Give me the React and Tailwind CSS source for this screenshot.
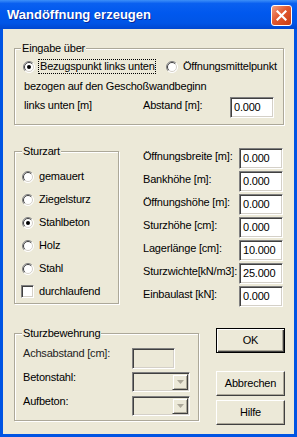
import React from 'react';

const sunken =
  'border border-t-[#808080] border-l-[#808080] border-r-white border-b-white shadow-[inset_1px_1px_0_#404040,inset_-1px_-1px_0_#D4D0C8]';
const group =
  'border border-[#ACA899] shadow-[inset_1px_1px_0_#fff,1px_1px_0_#fff] p-0 m-0';

const Radio = ({ checked }) => (
  <svg width="12" height="12" viewBox="0 0 12 12" className="shrink-0">
    <circle cx="6" cy="6" r="5.5" fill="#fff" />
    <path d="M2.1 9.9A5.5 5.5 0 0 1 9.9 2.1" fill="none" stroke="#808080" />
    <path d="M9.9 2.1A5.5 5.5 0 0 1 2.1 9.9" fill="none" stroke="#fff" />
    <path d="M2.8 9.2A4.5 4.5 0 0 1 9.2 2.8" fill="none" stroke="#404040" />
    <path d="M9.2 2.8A4.5 4.5 0 0 1 2.8 9.2" fill="none" stroke="#D4D0C8" />
    {checked && <circle cx="6" cy="6" r="2" fill="#000" />}
  </svg>
);

const TextBox = ({ value, className = '' }) => (
  <div className={`h-[21px] shrink-0 pl-[3px] leading-[19px] ${sunken} ${className}`}>{value}</div>
);

const Combo = () => (
  <div className={`w-[58px] h-[20px] flex justify-end p-[1px] bg-[#ECE9D8] ${sunken}`}>
    <div className="w-[16px] h-full flex items-center justify-center bg-[#ECE9D8] border border-t-[#ECE9D8] border-l-[#ECE9D8] border-r-[#404040] border-b-[#404040] shadow-[inset_1px_1px_0_#fff,inset_-1px_-1px_0_#ACA899]">
      <svg width="7" height="4" viewBox="0 0 7 4">
        <path d="M0 0h7L3.5 4z" fill="#ACA899" />
      </svg>
    </div>
  </div>
);

const Button = ({ label, isDefault, className = '' }) => (
  <div
    className={`w-[69px] h-[25px] flex items-center justify-center ${
      isDefault
        ? 'border border-black shadow-[inset_1px_1px_0_#fff,inset_-1px_-1px_0_#404040,inset_-2px_-2px_0_#ACA899]'
        : 'border border-t-white border-l-white border-r-[#404040] border-b-[#404040] shadow-[inset_-1px_-1px_0_#ACA899]'
    } ${className}`}
  >
    {label}
  </div>
);

const fields = [
  ['Öffnungsbreite [m]:', '0.000'],
  ['Bankhöhe [m]:', '0.000'],
  ['Öffnungshöhe [m]:', '0.000'],
  ['Sturzhöhe [cm]:', '0.000'],
  ['Lagerlänge [cm]:', '10.000'],
  ['Sturzwichte[kN/m3]:', '25.000'],
  ['Einbaulast [kN]:', '0.000'],
];

const sturzarten = [
  ['gemauert', false],
  ['Ziegelsturz', false],
  ['Stahlbeton', true],
  ['Holz', false],
  ['Stahl', false],
];

export default function App() {
  return (
    <div className="w-[297px] h-[437px] flex flex-col bg-[#0054E3] font-['Liberation_Sans',Arial,sans-serif] text-[11px] leading-[13px] tracking-[-0.2px] text-black">
      {/* title bar */}
      <div className="h-[29px] shrink-0 flex items-start pl-[7px] pr-[5px] bg-[linear-gradient(180deg,#3d8ff8_0%,#0a60f0_12%,#0058ee_45%,#0055e6_80%,#0047d0_100%)]">
        <span className="flex-1 mt-[7px] text-[13px] leading-[15px] font-bold tracking-normal text-white [text-shadow:1px_1px_0_#0b2a99]">
          Wandöffnung erzeugen
        </span>
        <div className="mt-[5px] w-[21px] h-[21px] flex items-center justify-center rounded-[3px] border border-white bg-[linear-gradient(135deg,#f2a184_0%,#e2592f_45%,#c83c12_100%)]">
          <svg width="11" height="11" viewBox="0 0 11 11">
            <path d="M1.5 1.5l8 8M9.5 1.5l-8 8" stroke="#fff" strokeWidth="2.2" strokeLinecap="square" />
          </svg>
        </div>
      </div>

      {/* body */}
      <div className="flex-1 mx-[3px] mb-[3px] flex flex-col pl-[11px] bg-[#ECE9D8]">
        {/* Eingabe über */}
        <fieldset className={`mt-[13px] w-[270px] h-[83px] ${group}`}>
          <legend className="ml-[6px] px-[1px] bg-[#ECE9D8]">Eingabe über</legend>
          <div className="mt-[4px] h-[15px] flex items-center pl-[8px]">
            <Radio checked />
            <span className="ml-[3px] w-[118px] h-[15px] pl-[1px] overflow-hidden whitespace-nowrap border border-dotted border-black leading-[13px]">
              Bezugspunkt links unten
            </span>
            <span className="ml-[10px]">
              <Radio />
            </span>
            <span className="ml-[5px] whitespace-nowrap">Öffnungsmittelpunkt</span>
          </div>
          <div className="mt-[6px] pl-[9px]">bezogen auf den Geschoßwandbeginn</div>
          <div className="mt-[4px] flex items-start pl-[9px]">
            <span className="w-[119px] pt-[2px]">links unten [m]</span>
            <span className="w-[87px] pt-[2px]">Abstand [m]:</span>
            <TextBox value="0.000" className="w-[44px] bg-white" />
          </div>
        </fieldset>

        {/* Sturzart + Werte */}
        <div className="mt-[20px] h-[159px] flex items-start">
          <fieldset className={`w-[105px] h-[159px] ${group}`}>
            <legend className="ml-[7px] px-[1px] bg-[#ECE9D8]">Sturzart</legend>
            <div className="mt-[7px] pl-[7px] flex flex-col">
              {sturzarten.map(([label, checked]) => (
                <div key={label} className="h-[23px] flex items-center gap-[5px]">
                  <Radio checked={checked} />
                  <span>{label}</span>
                </div>
              ))}
              <div className="h-[23px] flex items-center gap-[5px]">
                <span className={`w-[13px] h-[13px] -ml-[1px] bg-white ${sunken}`} />
                <span>durchlaufend</span>
              </div>
            </div>
          </fieldset>

          <div className="ml-[24px] mt-[3px] flex flex-col">
            {fields.map(([label, value]) => (
              <div key={label} className="h-[23px] flex items-start">
                <span className="w-[96px] pt-[2px] whitespace-nowrap">{label}</span>
                <TextBox value={value} className="w-[44px] bg-white" />
              </div>
            ))}
          </div>
        </div>

        {/* Sturzbewehrung + Buttons */}
        <div className="mt-[23px] flex items-start">
          <fieldset className={`w-[185px] h-[94px] ${group}`}>
            <legend className="ml-[7px] px-[1px] bg-[#ECE9D8]">Sturzbewehrung</legend>
            <div className="mt-[8px] pl-[8px] flex flex-col">
              <div className="h-[24px] flex items-start">
                <span className="w-[109px] -mt-[1px] text-[#222]">Achsabstand [cm]:</span>
                <TextBox value="" className="w-[43px] bg-[#ECE9D8]" />
              </div>
              <div className="h-[24px] flex items-start">
                <span className="w-[109px] -mt-[1px]">Betonstahl:</span>
                <Combo />
              </div>
              <div className="h-[24px] flex items-start">
                <span className="w-[109px] -mt-[1px]">Aufbeton:</span>
                <Combo />
              </div>
            </div>
          </fieldset>

          <div className="ml-[17px] mt-[1px] flex flex-col">
            <Button label="OK" isDefault />
            <Button label="Abbrechen" className="mt-[18px]" />
            <Button label="Hilfe" className="mt-[4px]" />
          </div>
        </div>
      </div>
    </div>
  );
}
